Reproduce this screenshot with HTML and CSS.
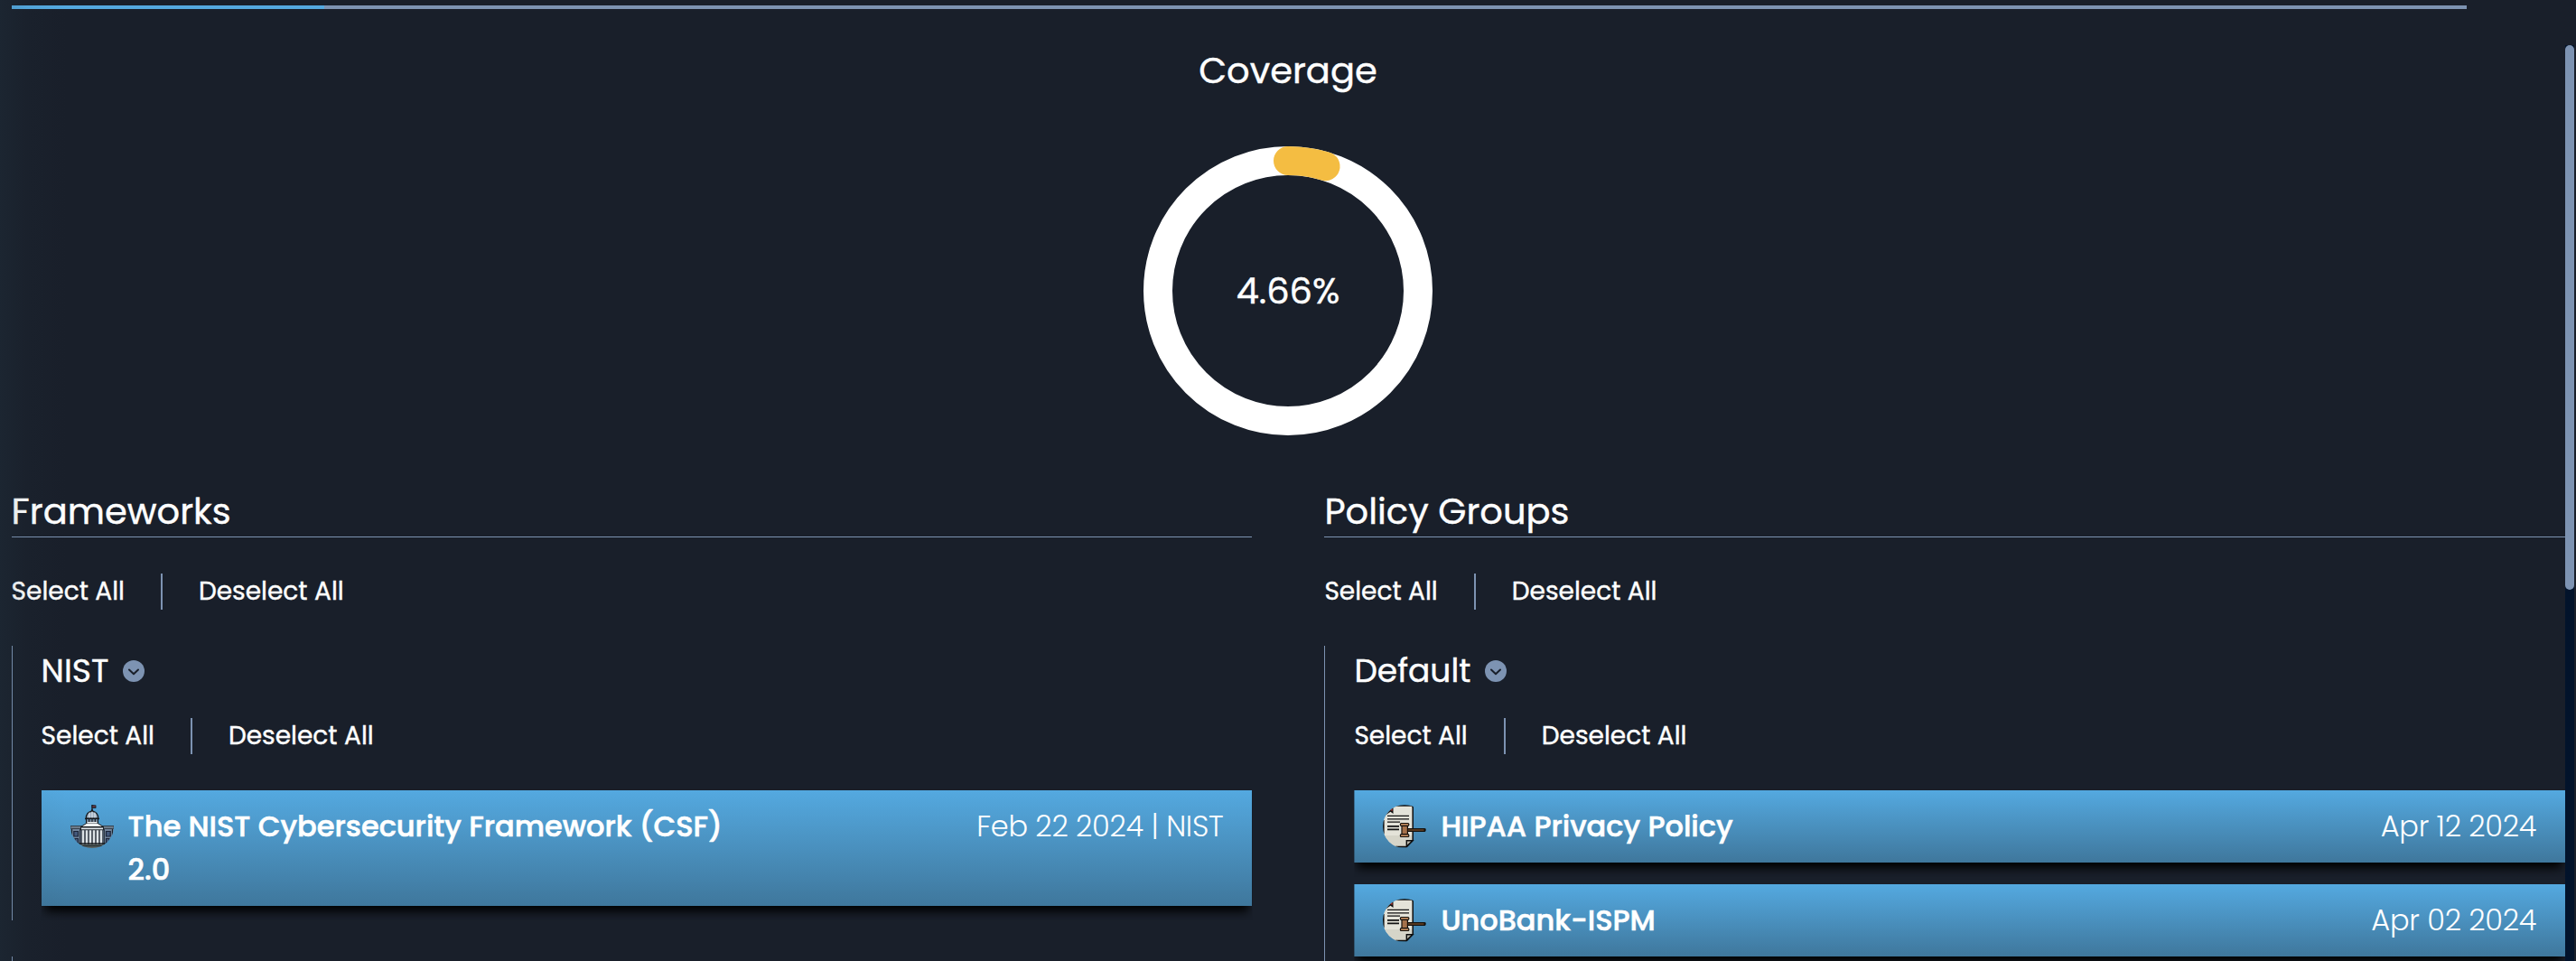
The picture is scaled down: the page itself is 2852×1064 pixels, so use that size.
FILE: index.html
```html
<!DOCTYPE html>
<html lang="en">
<head>
<meta charset="utf-8">
<title>Coverage</title>
<link rel="stylesheet" href="styles.css">
</head>
<body>
<svg class="defs" width="0" height="0" aria-hidden="true">
  <defs>
    <clipPath id="disc"><circle cx="24" cy="24" r="24"/></clipPath>
    <symbol id="chevron" viewBox="0 0 24 24">
      <circle cx="12" cy="12" r="12" fill="#7d93b2"/>
      <path d="M7 10.5 12 15.2 17 10.5" fill="none" stroke="#191f2a" stroke-width="2" stroke-linecap="round" stroke-linejoin="round"/>
    </symbol>
    <symbol id="capitol" viewBox="0 0 48 48">
      <g clip-path="url(#disc)">
        <path d="M24 0V6" stroke="#14181d" stroke-width="1.2"/>
        <rect x="24" y="0.6" width="4" height="2.8" fill="#5c3440" stroke="#14181d" stroke-width=".8"/>
        <path d="M22 7.5 24 4.5 26 7.5Z" fill="#14181d"/>
        <path d="M17.2 15.2C17.2 10.5 20 7.3 24 7.3S30.8 10.5 30.8 15.2Z" fill="#9fb0c2" stroke="#14181d" stroke-width="1.2"/>
        <path d="M21 8.6V14.5M24 7.5V14.5M27 8.6V14.5" stroke="#e6ecf1" stroke-width="1"/>
        <path d="M16 15.5H32" stroke="#14181d" stroke-width="1.6"/>
        <rect x="17" y="16.3" width="14" height="3.7" fill="#79889a"/>
        <path d="M17.5 16V20M20.7 16V20M24 16V20M27.3 16V20M30.5 16V20" stroke="#14181d" stroke-width="1.1"/>
        <rect x="0" y="26" width="48" height="22" fill="#71839a"/>
        <rect x="0" y="23.5" width="48" height="3" fill="#6d7b8a" stroke="#2b333d" stroke-width=".8"/>
        <path d="M11.5 24.5 18 20.3H30L36.5 24.5Z" fill="#eef1f3" stroke="#14181d" stroke-width="1"/>
        <path d="M18.5 19.8H29.5" stroke="#eef1f3" stroke-width="1.6"/>
        <rect x="11.5" y="25" width="25" height="2.8" fill="#dfe4e8" stroke="#14181d" stroke-width=".9"/>
        <rect x="12" y="28" width="24" height="16" fill="#2c343f"/>
        <path d="M14 28.3V44M18 28.3V44M22 28.3V44M26 28.3V44M30 28.3V44M34 28.3V44" stroke="#dce2e6" stroke-width="2.5"/>
        <path d="M1.5 27V40M10.8 27V44M37.2 27V44M46.5 27V40" stroke="#1b222b" stroke-width="1.2"/>
        <path d="M3.8 29.5H8.5V35H3.8ZM39.5 29.5H44.2V35H39.5ZM5 37.5H8.5V42H5ZM39.5 37.5H43V42H39.5Z" fill="#44597c" stroke="#1b2438" stroke-width="1.2"/>
        <path d="M5 43H43" stroke="#14181d" stroke-width="1.6"/>
        <rect x="4" y="44" width="40" height="4" fill="#55605f"/>
        <path d="M8 45.6H40" stroke="#23292b" stroke-width="1"/>
      </g>
    </symbol>
    <symbol id="ruling" viewBox="0 0 48 48">
      <g clip-path="url(#disc)">
        <path d="M1 4Q1 1 8 1H31Q33.2 1 33.2 3.2V39.5L26.5 46.5H1Z" fill="#e4e3d9"/>
        <path d="M1 34H33V39.5L26.5 46.5H1Z" fill="#d6d5c9"/>
        <path d="M.8 17V32" stroke="#0c0c0c" stroke-width="1.6"/>
        <path d="M14 1H31Q33.2 1 33.2 3.2V39.5L26.5 46.5H14" fill="none" stroke="#0c0c0c" stroke-width="1.5"/>
        <path d="M26.3 46V39.7H33Z" fill="#b9b8ac" stroke="#0c0c0c" stroke-width="1.4"/>
        <path d="M3 11.5 8.5 7.8 11.5 10V3H5Z" fill="#121212"/>
        <path d="M8.5 4.5H10.5V7L8.5 6Z" fill="#b4342c"/>
        <path d="M5 12.4H29M5 15.8H29M5 19.2H19" stroke="#121212" stroke-width="1.2"/>
        <path d="M5 23.8H18M5 27.3H18" stroke="#121212" stroke-width="1.7"/>
        <path d="M28 28H46" stroke="#14100c" stroke-width="4.2" stroke-linecap="round"/>
        <path d="M28 28H45.5" stroke="#6a4426" stroke-width="1.6"/>
        <rect x="21" y="22" width="6.4" height="12" fill="#a5714a" stroke="#14100c" stroke-width="1.2"/>
        <rect x="19.4" y="20.5" width="9.4" height="2.8" rx="1" fill="#c08a5e" stroke="#14100c" stroke-width="1.2"/>
        <rect x="19.4" y="32.7" width="9.4" height="2.8" rx="1" fill="#c08a5e" stroke="#14100c" stroke-width="1.2"/>
      </g>
    </symbol>
  </defs>
</svg>

<main class="page">
  <div class="progress"><div class="progress-fill"></div></div>

  <section class="coverage">
    <h1 class="coverage-title">Coverage</h1>
    <div class="ring">
      <svg class="ring-chart" viewBox="0 0 320 320">
        <circle cx="160" cy="160" r="144" fill="none" stroke="#fff" stroke-width="32"/>
        <circle cx="160" cy="160" r="144" fill="none" stroke="#f4bd42" stroke-width="32" stroke-linecap="round" pathLength="100" stroke-dasharray="4.66 95.34" transform="rotate(-90 160 160)"/>
      </svg>
      <span class="ring-value">4.66%</span>
    </div>
  </section>

  <div class="columns">
    <section class="column">
      <h2 class="heading">Frameworks</h2>
      <div class="actions"><span>Select All</span><i class="divider"></i><span>Deselect All</span></div>
      <div class="group">
        <h3 class="group-title">NIST<svg class="toggle"><use href="#chevron"/></svg></h3>
        <div class="actions"><span>Select All</span><i class="divider"></i><span>Deselect All</span></div>
        <div class="cards">
          <article class="card">
            <svg class="card-icon"><use href="#capitol"/></svg>
            <span class="card-title">The NIST Cybersecurity Framework (CSF) 2.0</span>
            <span class="card-date">Feb 22 2024 | NIST</span>
          </article>
        </div>
      </div>
      <div class="group"></div>
    </section>

    <section class="column">
      <h2 class="heading">Policy Groups</h2>
      <div class="actions"><span>Select All</span><i class="divider"></i><span>Deselect All</span></div>
      <div class="group">
        <h3 class="group-title">Default<svg class="toggle"><use href="#chevron"/></svg></h3>
        <div class="actions"><span>Select All</span><i class="divider"></i><span>Deselect All</span></div>
        <div class="cards">
          <article class="card">
            <svg class="card-icon"><use href="#ruling"/></svg>
            <span class="card-title">HIPAA Privacy Policy</span>
            <span class="card-date">Apr 12 2024</span>
          </article>
          <article class="card">
            <svg class="card-icon"><use href="#ruling"/></svg>
            <span class="card-title">UnoBank-ISPM</span>
            <span class="card-date">Apr 02 2024</span>
          </article>
        </div>
      </div>
    </section>
  </div>
</main>
<div class="scrollbar"><div class="scrollbar-thumb"></div></div>
<div class="edge-fade"></div>
</body>
</html>
```
FILE: styles.css
```css
* {
  box-sizing: border-box;
}

body {
  display: flex;
  height: 1064px;
  margin: 0;
  overflow: hidden;
  background: #191f2a;
  color: #fff;
  font-family: Poppins, Inter, "Liberation Sans", sans-serif;
  font-size: 28px;
  -webkit-text-stroke: .4px #fff;
}

h1,
h2,
h3 {
  margin: 0;
  font-weight: 400;
}

.defs {
  position: absolute;
}

.page {
  width: 2840px;
  height: 1064px;
  padding: 6px 0 0 13px;
  overflow: hidden;
}

.progress {
  width: 2718px;
  height: 4px;
  background: #7d93b2;
}

.progress-fill {
  width: 346px;
  height: 4px;
  background: #54a9e0;
}

/* Coverage ring */
.coverage {
  display: flex;
  flex-direction: column;
  align-items: center;
  margin: 38px 0 0 -1px;
}

.coverage-title {
  font-size: 40px;
  line-height: 60px;
}

.ring {
  display: grid;
  place-items: center;
  width: 320px;
  height: 320px;
  margin-top: 54px;
}

.ring-chart,
.ring-value {
  grid-area: 1 / 1;
}

.ring-chart {
  width: 320px;
  height: 320px;
}

.ring-value {
  font-size: 40px;
  line-height: 60px;
}

/* Two-column list */
.columns {
  display: grid;
  grid-template-columns: 1373.8px 1373.8px;
  gap: 80px;
  margin: 55px 0 0 -.4px;
}

.heading {
  height: 58px;
  padding-top: 1px;
  border-bottom: 1px solid #7d93b2;
  font-size: 40px;
  line-height: 56px;
}

.actions {
  display: flex;
  height: 40px;
  margin-top: 40px;
  line-height: 39px;
}

.divider {
  width: 2px;
  height: 40px;
  margin: 0 40px;
  background: #7d93b2;
}

.group {
  margin-top: 40px;
  min-height: 40px;
  padding: 0 0 16px 32px;
  border-left: 1px solid #7d93b2;
}

.group .actions {
  margin-top: 26px;
}

.group-title {
  display: flex;
  height: 54px;
  font-size: 36px;
  line-height: 55px;
}

.toggle {
  width: 24px;
  height: 24px;
  margin: 16px 0 0 16px;
}

.cards {
  display: flex;
  flex-direction: column;
  gap: 24px;
  margin-top: 40px;
}

.card {
  display: flex;
  gap: 16px;
  padding: 16px 32px;
  background: linear-gradient(#54a9e0, #3f779c);
  box-shadow: 0 10px 10px -4px #000;
  clip-path: inset(0 0 -16px 0);
  font-size: 32px;
  line-height: 48px;
}

.card-icon {
  flex: none;
  width: 48px;
  height: 48px;
}

.card-title {
  width: 700px;
  font-weight: 500;
  -webkit-text-stroke-width: .6px;
}

.card-date {
  margin-left: auto;
  font-weight: 300;
  letter-spacing: -.24px;
  white-space: nowrap;
  -webkit-text-stroke-width: 0;
}

/* Scrollbar */
.scrollbar {
  width: 10px;
  height: 1014px;
  margin-top: 50px;
  background: #02132b;
}

.scrollbar-thumb {
  height: 603px;
  border-radius: 5px;
  background: #7d93b2;
}

/* Fade along the left edge, over the content */
.edge-fade {
  position: absolute;
  inset: 0 auto 0 0;
  width: 74px;
  height: 1064px;
  background: linear-gradient(to right, rgba(42, 70, 84, .17), rgba(42, 70, 84, .05) 30px, rgba(42, 70, 84, 0));
  pointer-events: none;
}
```
